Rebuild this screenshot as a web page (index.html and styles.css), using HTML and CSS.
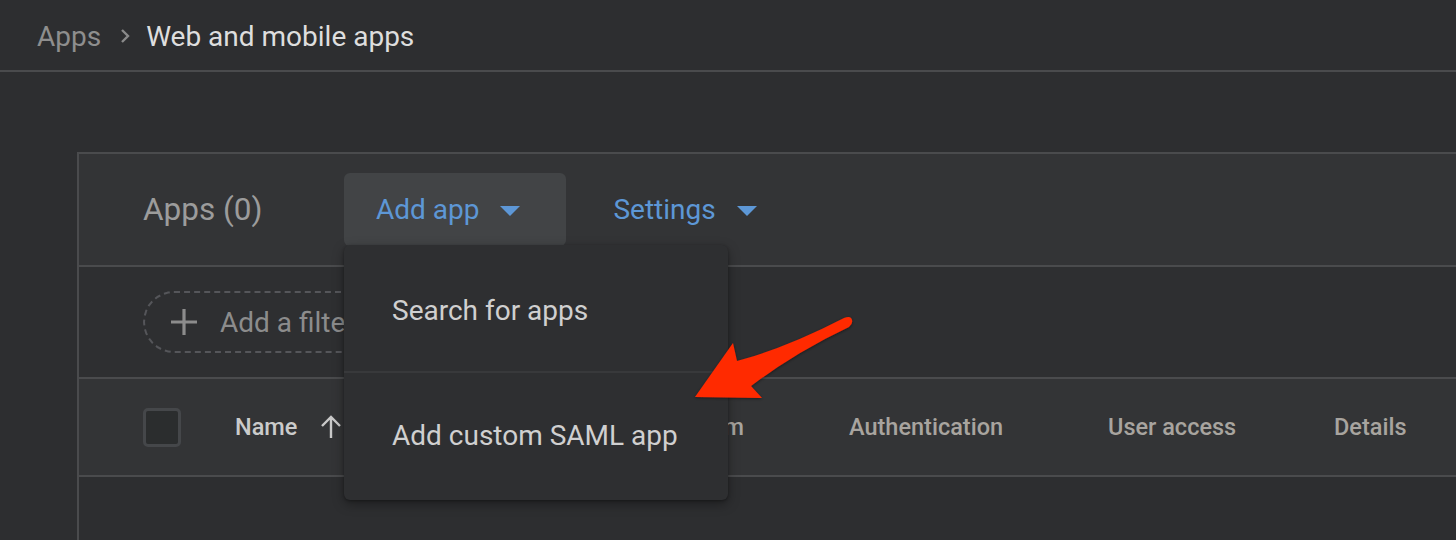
FILE: index.html
```html
<!DOCTYPE html>
<html>
<head>
<meta charset="utf-8">
<link rel="stylesheet" href="styles.css">
</head>
<body>
<div class="page">
  <header class="crumbs">
    <span class="crumb-parent">Apps</span>
    <svg class="chev" width="24" height="24" viewBox="0 0 24 24"><path d="M9 6l6 6-6 6" fill="none" stroke="#8a8a8a" stroke-width="2.4"/></svg>
    <span class="crumb-current">Web and mobile apps</span>
  </header>

  <main class="content">
    <section class="card">
      <div class="toolbar">
        <span class="count">Apps (0)</span>
        <button class="btn btn-active">Add app <span class="tri"></span></button>
        <button class="btn">Settings <span class="tri"></span></button>
      </div>
      <div class="filters">
        <div class="filter-pill">
          <svg class="plus" width="28" height="28" viewBox="0 0 28 28"><path d="M14 1v26M1 14h26" stroke="#8c8c8c" stroke-width="3.2"/></svg>
          <span>Add a filter</span>
        </div>
      </div>
      <div class="thead">
        <div class="cell cell-check"><span class="checkbox"></span></div>
        <div class="cell cell-name">Name
          <svg class="sort" width="24" height="26" viewBox="0 0 24 26"><path d="M12 24V3M3 12l9-9 9 9" fill="none" stroke="#c9c9c9" stroke-width="2.4"/></svg>
        </div>
        <div class="cell cell-platform">Platform</div>
        <div class="cell cell-auth">Authentication</div>
        <div class="cell cell-access">User access</div>
        <div class="cell cell-details">Details</div>
      </div>

      <div class="menu">
        <div class="menu-item">Search for apps</div>
        <div class="menu-item menu-item-last">Add custom SAML app</div>
      </div>
    </section>
  </main>

  <svg class="pointer" width="1456" height="540" viewBox="0 0 1456 540">
    <defs>
      <filter id="sh" x="-20%" y="-20%" width="140%" height="140%">
        <feDropShadow dx="0" dy="1" stdDeviation="1.5" flood-color="#000" flood-opacity="0.45"/>
      </filter>
    </defs>
    <path filter="url(#sh)" fill="#ff2a00" d="M695 397 L733 343 L737 361 Q786 348 844 318 Q851 315 852 320 Q853 324 849 327 Q796 352 751 386 L762 398 Z"/>
  </svg>
</div>
</body>
</html>
```

FILE: styles.css
```css
* { box-sizing: border-box; }
html, body { margin: 0; padding: 0; }
body {
  background: #2d2e30;
  font-family: Roboto, "Liberation Sans", sans-serif;
  width: 1456px;
  height: 540px;
  overflow: hidden;
}
.page { position: relative; width: 1456px; height: 540px; overflow: hidden; }

.crumbs {
  height: 72px;
  border-bottom: 2px solid #4a4b4d;
  display: flex;
  align-items: center;
  padding-left: 37px;
  padding-top: 2px;
  font-size: 28px;
}
.crumb-parent { color: #8e8e8e; }
.chev { margin: 0 9px 0 12px; }
.crumb-current { color: #dedede; }

.content { padding: 80px 0 0 77px; }

.card {
  position: relative;
  width: 1500px;
  height: 400px;
  border-left: 2px solid #4a4b4d;
  border-top: 2px solid #4a4b4d;
}

.toolbar {
  height: 113px;
  background: #333436;
  border-bottom: 2px solid #4a4b4d;
  display: flex;
  align-items: center;
  padding-left: 64px;
  padding-top: 0;
}
.count { color: #9c9c9c; font-size: 31.5px; width: 201px; }
.btn {
  font-family: inherit;
  font-size: 28px;
  color: #5d97d6;
  background: transparent;
  border: none;
  border-radius: 6px;
  height: 73px;
  padding: 0 46px 0 32px;
  display: flex;
  align-items: center;
  gap: 0;
  margin-right: 15px;
}
.btn-active { background: #424446; }
.tri {
  width: 0; height: 0;
  border-left: 10px solid transparent;
  border-right: 10px solid transparent;
  border-top: 10px solid #5d97d6;
  margin-left: 21px;
  margin-top: 2px;
}

.filters {
  height: 112px;
  background: #2e2f31;
  border-bottom: 2px solid #4a4b4d;
  display: flex;
  align-items: center;
  padding-left: 64px;
}
.filter-pill {
  height: 62px;
  width: 300px;
  border: 2px dashed #55565a;
  border-radius: 31px;
  display: flex;
  align-items: center;
  padding-left: 25px;
  color: #8c8c8c;
  font-size: 28px;
  gap: 22px;
}

.thead {
  height: 98px;
  background: #333436;
  border-bottom: 2px solid #4a4b4d;
  display: flex;
  align-items: center;
  padding-left: 64px;
  font-size: 23.5px;
  font-weight: 500;
  color: #a8a49f;
}
.cell { display: flex; align-items: center; }
.cell-check { width: 92px; }
.checkbox {
  width: 38px; height: 39px;
  border: 3px solid #45474a;
  border-radius: 5px;
  background: #2b2d2e;
}
.cell-name { width: 417px; color: #cbcbcb; gap: 22px; }
.cell-platform { width: 197px; }
.cell-auth { width: 259px; }
.cell-access { width: 226px; }

.menu {
  position: absolute;
  left: 265px;
  top: 91px;
  width: 384px;
  height: 255px;
  background: #2e2f31;
  border-radius: 6px;
  box-shadow: 0 4px 12px rgba(0,0,0,0.35), 0 1px 3px rgba(0,0,0,0.3);
  display: flex;
  flex-direction: column;
}
.menu-item {
  height: 128px;
  display: flex;
  align-items: center;
  padding-left: 48px;
  padding-top: 4px;
  color: #d0d0d0;
  font-size: 28px;
  border-bottom: 2px solid #38393b;
}
.menu-item-last { border-bottom: none; height: 125px; padding-top: 0; }

.pointer { position: absolute; left: 0; top: 0; pointer-events: none; }
```
